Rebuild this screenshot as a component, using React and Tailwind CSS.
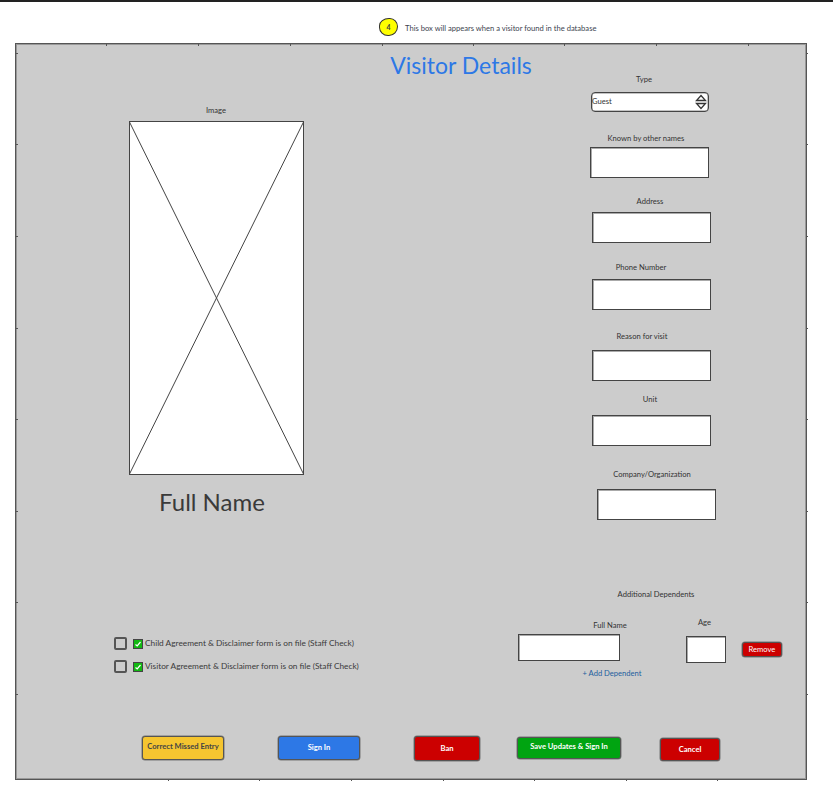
const font = { fontFamily: '"Lato", "Open Sans", sans-serif' }

const topTicks = [105, 197, 289, 381, 472, 563, 655, 747]
const bottomTicks = [167, 258, 350, 442, 533, 625, 716]
const sideTicks = [52, 143, 235, 327, 418, 510, 601, 693]

const Ticks = () => (
  <svg className="absolute left-[-15px] top-[-43px] pointer-events-none" width="833" height="794" fill="none" stroke="#555" strokeWidth="1">
    {topTicks.map((x) => (
      <line key={x} x1={x + 0.5} y1="43" x2={x + 0.5} y2="45" />
    ))}
    {bottomTicks.map((x) => (
      <line key={x} x1={x + 0.5} y1="778" x2={x + 0.5} y2="780" />
    ))}
    {sideTicks.map((y) => (
      <line key={y} x1="15" y1={y + 0.5} x2="17" y2={y + 0.5} />
    ))}
    {sideTicks.map((y) => (
      <line key={y + 1000} x1="805" y1={y + 0.5} x2="807" y2={y + 0.5} />
    ))}
  </svg>
)

const Label = ({ className, children }) => (
  <div className={`w-[120px] text-center text-[7.6px] leading-[12px] text-[#333] ${className}`}>{children}</div>
)

const Input = ({ className }) => (
  <div className={`bg-white border border-[#444] shadow-[inset_1px_1px_0_#aaa] ${className}`}></div>
)

const Check = ({ text }) => (
  <div className="flex items-center h-[13px]">
    <div className="w-[13px] h-[13px] rounded-[2px] border-2 border-[#555]"></div>
    <div className="ml-[6px] w-[10px] h-[10px] bg-[#12b812] border border-[#444] flex items-center justify-center">
      <svg width="8" height="8" viewBox="0 0 8 8" fill="none" stroke="#fff" strokeWidth="1.2">
        <path d="M1.5 4.5 L3.2 6 L6.5 2" />
      </svg>
    </div>
    <span className="ml-[2px] mb-[2px] text-[8.3px] leading-[12px] text-[#3a3a3a] whitespace-nowrap">{text}</span>
  </div>
)

const Btn = ({ className, children }) => (
  <div className={`flex items-center justify-center text-[7.6px] font-bold rounded-[3px] border border-[#555] shadow-[0_0_0_0.5px_#777] whitespace-nowrap ${className}`}>
    {children}
  </div>
)

export default function App() {
  return (
    <div className="w-[833px] h-[794px] bg-white overflow-hidden" style={font}>
      <div className="h-[2px] bg-[#222]"></div>

      {/* note */}
      <div className="h-[41px] flex items-start pl-[379px] pt-[16px]">
        <div className="w-[19px] h-[18px] bg-[#ffff00] border border-[#333] rounded-[55%_45%_50%_50%/45%_50%_55%_50%] flex items-center justify-center text-[7px] font-bold text-[#444]">
          4
        </div>
        <span className="ml-[7px] mt-[4px] text-[7.6px] leading-[12px] text-[#3d4450] whitespace-nowrap">
          This box will appears when a visitor found in the database
        </span>
      </div>

      {/* panel */}
      <div className="relative ml-[15px] w-[792px] h-[737px] bg-[#cccccc] border border-[#555] shadow-[inset_0_0_0_1px_#999]">
        <Ticks />

        <div className="flex h-[544px]">
          {/* image */}
          <div className="w-[359px] pt-[60px]">
            <Label className="ml-[140px]">Image</Label>
            <div className="ml-[113px] mt-[5px] w-[175px] h-[354px] bg-white">
              <svg width="175" height="354" fill="none" stroke="#444" strokeWidth="1">
                <rect x="0.5" y="0.5" width="174" height="353" />
                <line x1="0" y1="0" x2="175" y2="354" />
                <line x1="175" y1="0" x2="0" y2="354" />
              </svg>
            </div>
            <div className="ml-[109px] mt-[12px] w-[174px] text-center text-[24px] leading-[30px] text-[#3a3a3a]">Full Name</div>
          </div>

          {/* title */}
          <div className="w-[172px] pt-[6px] text-center text-[23px] leading-[30px] text-[#2d78e6] whitespace-nowrap">
            Visitor Details
          </div>

          {/* fields */}
          <div className="ml-[33px] pt-[29px]">
            <Label className="ml-[4px]">Type</Label>
            <div className="ml-[11px] mt-[7px] w-[118px] h-[20px] bg-white border border-[#444] shadow-[inset_0_0_0_0.5px_#888] rounded-[4px] flex items-center justify-between pr-[1px] text-[7.6px] text-[#333]">
              <span>Guest</span>
              <svg width="12" height="16" viewBox="0 0 12 16" fill="none" stroke="#333" strokeWidth="1.3">
                <path d="M6 1.5 L10.5 6.5 L1.5 6.5 Z" />
                <path d="M1.5 9.5 L10.5 9.5 L6 14.5 Z" />
              </svg>
            </div>

            <Label className="ml-[6px] mt-[20px]">Known by other names</Label>
            <Input className="ml-[10px] mt-[3px] w-[119px] h-[31px]" />

            <Label className="ml-[10px] mt-[17px]">Address</Label>
            <Input className="ml-[12px] mt-[5px] w-[119px] h-[31px]" />

            <Label className="ml-[1px] mt-[18px]">Phone Number</Label>
            <Input className="ml-[12px] mt-[6px] w-[119px] h-[31px]" />

            <Label className="ml-[2px] mt-[20px]">Reason for visit</Label>
            <Input className="ml-[12px] mt-[8px] w-[119px] h-[31px]" />

            <Label className="ml-[10px] mt-[12px]">Unit</Label>
            <Input className="ml-[12px] mt-[10px] w-[119px] h-[31px]" />

            <Label className="ml-[12px] mt-[22px]">Company/Organization</Label>
            <Input className="ml-[17px] mt-[9px] w-[119px] h-[31px]" />
          </div>
        </div>

        {/* checks and dependents */}
        <div className="flex h-[91px]">
          <div className="w-[502px] pl-[98px] pt-[49px] flex flex-col gap-[10px]">
            <Check text="Child Agreement & Disclaimer form is on file (Staff Check)" />
            <Check text="Visitor Agreement & Disclaimer form is on file (Staff Check)" />
          </div>
          <div>
            <Label className="ml-[78px]">Additional Dependents</Label>
            <div className="flex items-start mt-[16px]">
              <div className="w-[101px] pt-[3px]">
                <div className="text-[7.6px] leading-[12px] text-[#333] ml-[84px] w-[16px] whitespace-nowrap flex justify-center">Full Name</div>
                <Input className="mt-[3px] w-[102px] h-[27px]" />
              </div>
              <div className="ml-[67px] w-[40px]">
                <div className="text-center pr-[3px] text-[7.6px] leading-[12px] text-[#333]">Age</div>
                <Input className="mt-[8px] w-[40px] h-[27px]" />
              </div>
              <Btn className="ml-[16px] mt-[26px] w-[40px] h-[15px] bg-[#cc0000] text-white !font-normal">Remove</Btn>
            </div>
            <Label className="ml-[34px] mt-[4px] !text-[#1f5f9e]">+ Add Dependent</Label>
          </div>
        </div>

        {/* actions */}
        <div className="flex items-start mt-[57px]">
          <Btn className="ml-[126px] w-[82px] h-[24px] pb-[2px] bg-[#f5c530] text-[#444]">Correct Missed Entry</Btn>
          <Btn className="ml-[54px] w-[82px] h-[24px] bg-[#2d78e6] text-white">Sign In</Btn>
          <Btn className="ml-[54px] w-[66px] h-[25px] bg-[#cc0000] text-white">Ban</Btn>
          <Btn className="ml-[37px] mt-[1px] w-[104px] h-[22px] pb-[2px] bg-[#00a411] text-white">Save Updates & Sign In</Btn>
          <Btn className="ml-[39px] mt-[2px] w-[60px] h-[23px] bg-[#cc0000] text-white">Cancel</Btn>
        </div>
      </div>
    </div>
  )
}
